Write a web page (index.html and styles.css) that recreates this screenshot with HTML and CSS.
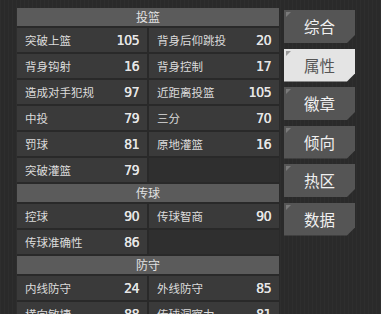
FILE: index.html
```html
<!DOCTYPE html>
<html lang="zh">
<head>
    <meta charset="UTF-8">
    <title>球员属性</title>
    <link rel="stylesheet" href="styles.css">
</head>
<body>
    <div class="page">
        <div class="attrs">
            <div class="group-title">投篮</div>
            <div class="grid">
                <div class="cell"><span>突破上篮</span><b>105</b></div>
                <div class="cell"><span>背身后仰跳投</span><b>20</b></div>
                <div class="cell"><span>背身钩射</span><b>16</b></div>
                <div class="cell"><span>背身控制</span><b>17</b></div>
                <div class="cell"><span>造成对手犯规</span><b>97</b></div>
                <div class="cell"><span>近距离投篮</span><b>105</b></div>
                <div class="cell"><span>中投</span><b>79</b></div>
                <div class="cell"><span>三分</span><b>70</b></div>
                <div class="cell"><span>罚球</span><b>81</b></div>
                <div class="cell"><span>原地灌篮</span><b>16</b></div>
                <div class="cell"><span>突破灌篮</span><b>79</b></div>
                <div class="cell empty"></div>
            </div>
            <div class="group-title">传球</div>
            <div class="grid">
                <div class="cell"><span>控球</span><b>90</b></div>
                <div class="cell"><span>传球智商</span><b>90</b></div>
                <div class="cell"><span>传球准确性</span><b>86</b></div>
                <div class="cell empty"></div>
            </div>
            <div class="group-title">防守</div>
            <div class="grid">
                <div class="cell"><span>内线防守</span><b>24</b></div>
                <div class="cell"><span>外线防守</span><b>85</b></div>
                <div class="cell"><span>横向敏捷</span><b>88</b></div>
                <div class="cell"><span>传球洞察力</span><b>81</b></div>
            </div>
        </div>

        <div class="tabs">
            <div class="tab">综合</div>
            <div class="tab active">属性</div>
            <div class="tab">徽章</div>
            <div class="tab">倾向</div>
            <div class="tab">热区</div>
            <div class="tab">数据</div>
        </div>
    </div>
</body>
</html>
```

FILE: styles.css
```css
/* Grundlayout */
body {
    margin: 0;
    height: 314px;
    overflow: hidden;
    background-color: #2a2a2a;
    background-image: linear-gradient(90deg, rgba(255,255,255,0.02) 1px, transparent 1px);
    background-size: 4px 4px;
    font-family: "Noto Sans CJK SC", "Noto Sans", sans-serif;
    color: #dcdcdc;
}

.page {
    display: flex;
    align-items: flex-start;
    padding: 8px 0 0 17px;
}

/* Attributliste */
.attrs {
    width: 262px;
    display: flex;
    flex-direction: column;
    gap: 2px;
    background-color: #292929;
}

.group-title {
    height: 18px;
    line-height: 18px;
    background-color: #5b5b5b;
    text-align: center;
    font-size: 12px;
    color: #e2e2e2;
}

.grid {
    display: grid;
    grid-template-columns: 130px 130px;
    gap: 2px;
}

.cell {
    height: 24px;
    display: flex;
    align-items: center;
    justify-content: space-between;
    padding: 0 8px 0 8px;
    background-color: #3a3a3a;
    font-size: 11.5px;
}

.cell.empty {
    background-color: #2f2f2f;
}

.cell b {
    font-family: "Liberation Sans Narrow", "DejaVu Sans Condensed", sans-serif;
    font-weight: normal;
    font-size: 14px;
    color: #e6e6e6;
    letter-spacing: -0.5px;
    text-shadow: 0.3px 0 0 #e6e6e6;
}

/* Reiter rechts */
.tabs {
    display: flex;
    flex-direction: column;
    gap: 5.5px;
    margin-left: 5px;
    padding-top: 2px;
}

.tab {
    position: relative;
    width: 71px;
    height: 33px;
    line-height: 33px;
    text-align: center;
    font-size: 15.5px;
    color: #f0f0f0;
    background-color: #555555;
    clip-path: polygon(0 0, 100% 0, 100% calc(100% - 8px), calc(100% - 8px) 100%, 0 100%);
}

.tab::before {
    content: "";
    position: absolute;
    left: 2px;
    top: 2px;
    border-top: 5px solid #7a7a7a;
    border-right: 5px solid transparent;
}

.tab.active {
    background-color: #e4e4e4;
    color: #555;
}

.tab.active::before {
    border-top-color: #9a9a9a;
}
```
